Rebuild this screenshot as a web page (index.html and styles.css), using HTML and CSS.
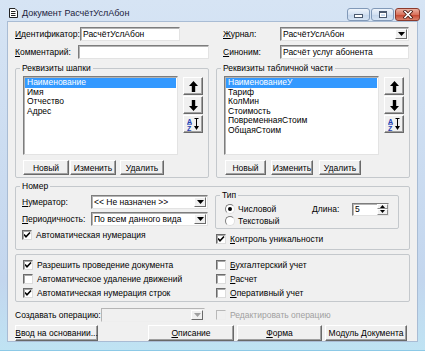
FILE: index.html
```html
<!DOCTYPE html>
<html lang="ru">
<head>
    <meta charset="UTF-8">
    <title>Документ РасчётУслАбон</title>
    <link rel="stylesheet" href="styles.css">
</head>
<body>
<div class="window">
    <div class="titlebar">
        <svg class="title-icon" width="9" height="10" viewBox="0 0 9 10">
            <path d="M0.5 0.5 H6 L8.5 3 V9.5 H0.5 Z" fill="#fff" stroke="#222"/>
            <path d="M2 3.5 H6.5 M2 5.5 H6.5 M2 7.5 H6.5" stroke="#222"/>
        </svg>
        <span class="title">Документ РасчётУслАбон</span>
        <div class="caption-btns">
            <span class="cap-btn"><i class="cap-min"></i></span>
            <span class="cap-btn"><i class="cap-max"></i></span>
            <span class="cap-btn cap-close">
                <svg width="10" height="9" viewBox="0 0 10 9">
                    <path d="M2 1.5 L8 7.5 M8 1.5 L2 7.5" stroke="#4a1a10" stroke-width="3.2" stroke-linecap="square"/>
                    <path d="M2 1.5 L8 7.5 M8 1.5 L2 7.5" stroke="#fff" stroke-width="1.6" stroke-linecap="square"/>
                </svg>
            </span>
        </div>
    </div>

    <div class="client">
        <div class="two-cols fields">
            <div class="field">
                <span class="lbl lbl-left"><u>И</u>дентификатор:</span>
                <div class="edit w-ident">РасчётУслАбон</div>
            </div>
            <div class="field field-right">
                <span class="lbl lbl-right"><u>Ж</u>урнал:</span>
                <div class="combo w-right"><span class="combo-text">РасчётУслАбон</span><span class="drop"><svg width="7" height="4" viewBox="0 0 7 4"><path d="M0 0 H7 L3.5 4 Z" fill="#000"/></svg></span></div>
            </div>
            <div class="field">
                <span class="lbl lbl-left"><u>К</u>омментарий:</span>
                <div class="edit w-comment"></div>
            </div>
            <div class="field field-right">
                <span class="lbl lbl-right"><u>С</u>иноним:</span>
                <div class="edit w-right">Расчёт услуг абонента</div>
            </div>
        </div>

        <div class="two-cols panels">
            <fieldset class="frame">
                <legend>Реквизиты шапки</legend>
                <div class="attr-body">
                    <div class="list-area">
                        <div class="list">
                            <div class="item selected">Наименование</div>
                            <div class="item">Имя</div>
                            <div class="item">Отчество</div>
                            <div class="item">Адрес</div>
                        </div>
                        <div class="side-btns">
                            <span class="btn icon-btn"><svg width="9" height="11" viewBox="0 0 9 11"><path d="M4.5 0 L9 5 H6.2 V11 H2.8 V5 H0 Z" fill="#000"/></svg></span>
                            <span class="btn icon-btn"><svg width="9" height="11" viewBox="0 0 9 11"><path d="M4.5 11 L9 6 H6.2 V0 H2.8 V6 H0 Z" fill="#000"/></svg></span>
                            <span class="btn icon-btn"><svg width="14" height="14" viewBox="0 0 14 14">
                                <text x="1" y="6.5" class="az">A</text>
                                <text x="1" y="13.5" class="az">Z</text>
                                <path d="M1 7.3 H6" stroke="#1f3fb4" stroke-width="0.8"/>
                                <path d="M8.5 1.5 H12.5 M10.5 1.5 V10" stroke="#000" stroke-width="1"/>
                                <path d="M8 9 H13 L10.5 13 Z" fill="#000"/>
                            </svg></span>
                        </div>
                    </div>
                    <div class="btn-row">
                        <span class="btn b-new1">Новый</span>
                        <span class="btn b-edit1">Изменить</span>
                        <span class="btn b-del1">Удалить</span>
                    </div>
                </div>
            </fieldset>

            <fieldset class="frame">
                <legend>Реквизиты табличной части</legend>
                <div class="attr-body">
                    <div class="list-area">
                        <div class="list">
                            <div class="item selected">НаименованиеУ</div>
                            <div class="item">Тариф</div>
                            <div class="item">КолМин</div>
                            <div class="item">Стоимость</div>
                            <div class="item">ПовременнаяСтоим</div>
                            <div class="item">ОбщаяСтоим</div>
                        </div>
                        <div class="side-btns">
                            <span class="btn icon-btn"><svg width="9" height="11" viewBox="0 0 9 11"><path d="M4.5 0 L9 5 H6.2 V11 H2.8 V5 H0 Z" fill="#000"/></svg></span>
                            <span class="btn icon-btn"><svg width="9" height="11" viewBox="0 0 9 11"><path d="M4.5 11 L9 6 H6.2 V0 H2.8 V6 H0 Z" fill="#000"/></svg></span>
                            <span class="btn icon-btn"><svg width="14" height="14" viewBox="0 0 14 14">
                                <text x="1" y="6.5" class="az">A</text>
                                <text x="1" y="13.5" class="az">Z</text>
                                <path d="M1 7.3 H6" stroke="#1f3fb4" stroke-width="0.8"/>
                                <path d="M8.5 1.5 H12.5 M10.5 1.5 V10" stroke="#000" stroke-width="1"/>
                                <path d="M8 9 H13 L10.5 13 Z" fill="#000"/>
                            </svg></span>
                        </div>
                    </div>
                    <div class="btn-row">
                        <span class="btn b-new2">Новый</span>
                        <span class="btn b-edit2">Изменить</span>
                        <span class="btn b-del2">Удалить</span>
                    </div>
                </div>
            </fieldset>
        </div>

        <fieldset class="frame number-frame">
            <legend>Номер</legend>
            <div class="number-grid">
                <div class="number-left">
                    <div class="field">
                        <span class="lbl lbl-num"><u>Н</u>умератор:</span>
                        <div class="combo w-num"><span class="combo-text">&lt;&lt; Не назначен &gt;&gt;</span><span class="drop"><svg width="7" height="4" viewBox="0 0 7 4"><path d="M0 0 H7 L3.5 4 Z" fill="#000"/></svg></span></div>
                    </div>
                    <div class="field">
                        <span class="lbl lbl-num"><u>П</u>ериодичность:</span>
                        <div class="combo w-num"><span class="combo-text">По всем данного вида</span><span class="drop"><svg width="7" height="4" viewBox="0 0 7 4"><path d="M0 0 H7 L3.5 4 Z" fill="#000"/></svg></span></div>
                    </div>
                    <div class="check check-auto"><span class="box on"></span><span>Автоматическая нумерация</span></div>
                </div>
                <div class="number-right">
                    <fieldset class="frame type-frame">
                        <legend>Тип</legend>
                        <div class="type-grid">
                            <div class="radio"><span class="dot on"></span><span>Числовой</span></div>
                            <span class="lbl"><u>Д</u>лина:</span>
                            <div class="spin"><span class="spin-text">5</span><span class="spin-btns"><span><svg width="5" height="3" viewBox="0 0 5 3"><path d="M0 3 H5 L2.5 0 Z" fill="#000"/></svg></span><span><svg width="5" height="3" viewBox="0 0 5 3"><path d="M0 0 H5 L2.5 3 Z" fill="#000"/></svg></span></span></div>
                            <div class="radio"><span class="dot"></span><span>Текстовый</span></div>
                        </div>
                    </fieldset>
                    <div class="check check-unique"><span class="box on"></span><span><u>К</u>онтроль уникальности</span></div>
                </div>
            </div>
        </fieldset>

        <fieldset class="frame flags-frame">
            <div class="flags-grid">
                <div class="check"><span class="box on"></span><span>Разрешить проведение документа</span></div>
                <div class="check"><span class="box"></span><span><u>Б</u>ухгалтерский учет</span></div>
                <div class="check"><span class="box"></span><span>Автоматическое удаление движений</span></div>
                <div class="check"><span class="box"></span><span><u>Р</u>асчет</span></div>
                <div class="check"><span class="box on"></span><span>Автоматическая нумерация строк</span></div>
                <div class="check"><span class="box"></span><span><u>О</u>перативный учет</span></div>
            </div>
        </fieldset>

        <div class="two-cols operation-row">
            <div class="field">
                <span class="lbl lbl-op">Создавать операцию:</span>
                <div class="combo disabled w-op"><span class="combo-text"></span><span class="drop"><svg width="7" height="4" viewBox="0 0 7 4"><path d="M0 0 H7 L3.5 4 Z" fill="#a0a0a0"/></svg></span></div>
            </div>
            <div class="check disabled-text"><span class="box off"></span><span>Редактировать операцию</span></div>
        </div>

        <div class="bottom-btns">
            <span class="btn b-base"><span><u>В</u>вод на основании...</span></span>
            <span class="btn b-desc"><span><u>О</u>писание</span></span>
            <span class="btn b-form"><span><u>Ф</u>орма</span></span>
            <span class="btn b-module"><span>Модуль <u>Д</u>окумента</span></span>
        </div>
    </div>
</div>
</body>
</html>
```

FILE: styles.css
```css
/* Окно */
body {
    margin: 0;
    font-family: 'Liberation Sans', Arial, sans-serif;
    font-size: 8.5px;
    color: #000;
}

.window {
    width: 425px;
    height: 351px;
    box-sizing: border-box;
    padding: 0 7px 8px;
    display: flex;
    flex-direction: column;
    background: linear-gradient(#d6e4f4, #c3d6ee 80%, #bfe3f3);
    border-bottom: 1px solid #8cc9e6;
}

/* Заголовок */
.titlebar {
    height: 23px;
    display: flex;
    align-items: center;
    padding-left: 2px;
}

.title-icon {
    margin-right: 4px;
    margin-top: 4px;
}

.title {
    font-size: 9px;
    color: #1c1c3c;
    margin-top: 4px;
}

.caption-btns {
    margin-left: auto;
    margin-right: -2px;
    margin-top: 8px;
    align-self: flex-start;
    display: flex;
    gap: 1px;
}

.cap-btn {
    width: 23px;
    height: 13px;
    box-sizing: border-box;
    border: 1px solid #8199b8;
    border-radius: 3px;
    background: linear-gradient(#eef4fb, #d3e1f2 50%, #c3d5ec 51%, #d6e4f4);
    display: flex;
    align-items: center;
    justify-content: center;
}

.cap-min {
    width: 7px;
    height: 2px;
    margin-top: 3px;
    background: #fff;
    border: 1px solid #4b5a70;
}

.cap-max {
    width: 6px;
    height: 4px;
    background: transparent;
    border: 1px solid #4b5a70;
    border-top-width: 2px;
    box-shadow: 0 0 0 1px #fff inset;
}

.cap-close {
    width: 25px;
    border-color: #8c3a2c;
    background: linear-gradient(#eab1a2, #d9735d 50%, #c4422c 51%, #d9826c);
}

/* Клиентская область */
.client {
    flex: 1;
    background: #f0f0f0;
    border: 1px solid #a9bcd4;
    padding: 5px 7px 0;
    display: flex;
    flex-direction: column;
}

.two-cols {
    display: grid;
    grid-template-columns: 194px 194px;
    column-gap: 7px;
}

.fields {
    row-gap: 4px;
}

.field {
    display: flex;
    align-items: center;
    height: 14px;
}

.field-right {
    padding-left: 7px;
}

.lbl {
    white-space: nowrap;
}

.lbl-left { width: 65px; }
.lbl-right { width: 57px; }
.lbl-num { width: 69px; }
.lbl-op { width: 86px; }

.w-ident { width: 100px; }
.w-comment { width: 131px; flex-shrink: 0; }
.w-right { width: 129px; }
.w-num { width: 117px; }
.w-op { width: 104px; }

.edit, .combo, .list, .spin {
    box-sizing: border-box;
    background: #fff;
    border: 1px solid;
    border-color: #7d7d7d #e3e3e3 #e3e3e3 #7d7d7d;
    box-shadow: inset 1px 1px 0 #b4b4b4;
}

.edit, .combo {
    height: 14px;
    line-height: 12px;
    padding-left: 2px;
    white-space: nowrap;
    overflow: hidden;
}

.combo {
    display: flex;
    padding-right: 1px;
}

.combo-text {
    flex: 1;
    overflow: hidden;
}

.drop {
    width: 12px;
    height: 10px;
    margin-top: 1px;
    box-sizing: border-box;
    background: #f0f0f0;
    border: 1px solid;
    border-color: #fff #6a6a6a #6a6a6a #fff;
    display: flex;
    align-items: center;
    justify-content: center;
}

.combo.disabled {
    background: #f0f0f0;
    border-color: #b5b5b5 #eee #eee #b5b5b5;
    box-shadow: none;
}

/* Рамки */
.frame {
    margin: 0;
    padding: 0;
    min-width: 0;
    border: 1px solid #c4c8cc;
    border-radius: 2px;
}

.frame legend {
    padding: 0 2px;
    margin: 0 0 0 4px;
    line-height: 10px;
    text-align: left;
}

.panels {
    margin-top: 4px;
}

.attr-body {
    padding: 3px 0 2px 7px;
}

.list-area {
    display: flex;
    gap: 5px;
}

.list {
    width: 155px;
    height: 79px;
    padding: 1px 1px;
}

.item {
    height: 9.5px;
    line-height: 9.5px;
    padding-left: 2px;
    white-space: nowrap;
}

.item.selected {
    background: #3399ff;
    color: #fff;
}

.side-btns {
    display: flex;
    flex-direction: column;
    gap: 1px;
    padding-top: 1px;
}

.btn {
    box-sizing: border-box;
    background: #f0f0f0;
    border: 1px solid;
    border-color: #fff #696969 #696969 #fff;
    box-shadow: inset -1px -1px 0 #a0a0a0;
    display: flex;
    align-items: center;
    justify-content: center;
    white-space: nowrap;
}

.icon-btn {
    width: 20px;
    height: 18px;
}

.az {
    font-family: 'Liberation Sans', Arial, sans-serif;
    font-size: 7px;
    font-weight: bold;
    fill: #1f3fb4;
}

.btn-row {
    display: flex;
    margin-top: 5px;
    height: 15px;
}

.btn-row .btn {
    height: 15px;
}

.b-new1 { width: 46px; }
.b-edit1 { width: 46px; margin-left: 1px; }
.b-del1 { width: 44px; margin-left: 4px; }
.b-new2 { width: 41px; margin-left: 1px; }
.b-edit2 { width: 42px; margin-left: 5px; }
.b-del2 { width: 42px; margin-left: 6px; }

/* Номер */
.number-frame {
    margin-top: 3px;
}

.number-grid {
    display: grid;
    grid-template-columns: 193px 1fr;
    padding: 4px 0 4px 6px;
}

.number-left {
    display: flex;
    flex-direction: column;
    gap: 3px;
}

.type-frame {
    margin-top: -5px;
    width: 184px;
    box-sizing: border-box;
}

.type-grid {
    display: grid;
    grid-template-columns: 87px 40px 37px;
    grid-auto-rows: 12px;
    align-items: center;
    padding: 3px 0 1px 9px;
}

.radio {
    display: flex;
    align-items: center;
    gap: 3px;
}

.dot {
    width: 10px;
    height: 10px;
    box-sizing: border-box;
    border-radius: 50%;
    border: 1px solid;
    border-color: #7d7d7d #e0e0e0 #e0e0e0 #7d7d7d;
    background: #fff;
    display: flex;
    align-items: center;
    justify-content: center;
}

.dot.on::after {
    content: "";
    width: 4px;
    height: 4px;
    border-radius: 50%;
    background: #000;
}

.spin {
    height: 13px;
    display: flex;
    padding-left: 2px;
    line-height: 11px;
}

.spin-text {
    flex: 1;
}

.spin-btns {
    width: 11px;
    display: flex;
    flex-direction: column;
}

.spin-btns span {
    flex: 1;
    background: #f0f0f0;
    border: 1px solid;
    border-color: #fff #8a8a8a #8a8a8a #fff;
    display: flex;
    align-items: center;
    justify-content: center;
    box-sizing: border-box;
}

.check {
    display: flex;
    align-items: center;
    gap: 4px;
    height: 12px;
    white-space: nowrap;
}

.box {
    width: 10px;
    height: 10px;
    box-sizing: border-box;
    flex-shrink: 0;
    background: #fff;
    border: 1px solid;
    border-color: #6b6b6b #dcdcdc #dcdcdc #6b6b6b;
    box-shadow: inset 1px 1px 0 #a8a8a8;
}

.box.on {
    background: #fff url("data:image/svg+xml,%3Csvg xmlns='http://www.w3.org/2000/svg' width='8' height='8' viewBox='0 0 8 8'%3E%3Cpath d='M1 3.5 L3 5.8 L7 1.5' fill='none' stroke='%23000' stroke-width='1.6'/%3E%3C/svg%3E") center / 8px 8px no-repeat;
}

.box.off {
    background: #f0f0f0;
    border-color: #b8b8b8 #eee #eee #b8b8b8;
    box-shadow: none;
}

.check-unique {
    margin-top: 4px;
    margin-left: 1px;
}

/* Флаги */
.flags-frame {
    margin-top: 4px;
}

.flags-grid {
    display: grid;
    grid-template-columns: 193px 1fr;
    grid-auto-rows: 14px;
    padding: 3px 0 1px 7px;
}

.flags-grid .check {
    height: 14px;
}

.operation-row {
    margin-top: 6px;
    align-items: center;
}

.disabled-text {
    color: #a0a0a0;
}

/* Нижние кнопки */
.bottom-btns {
    display: flex;
    margin-top: 3px;
}

.bottom-btns .btn {
    height: 16px;
}

.b-base { width: 83px; }
.b-desc { width: 86px; margin-left: 50px; }
.b-form { width: 85px; margin-left: 3px; }
.b-module { width: 82px; margin-left: 3px; }
```
